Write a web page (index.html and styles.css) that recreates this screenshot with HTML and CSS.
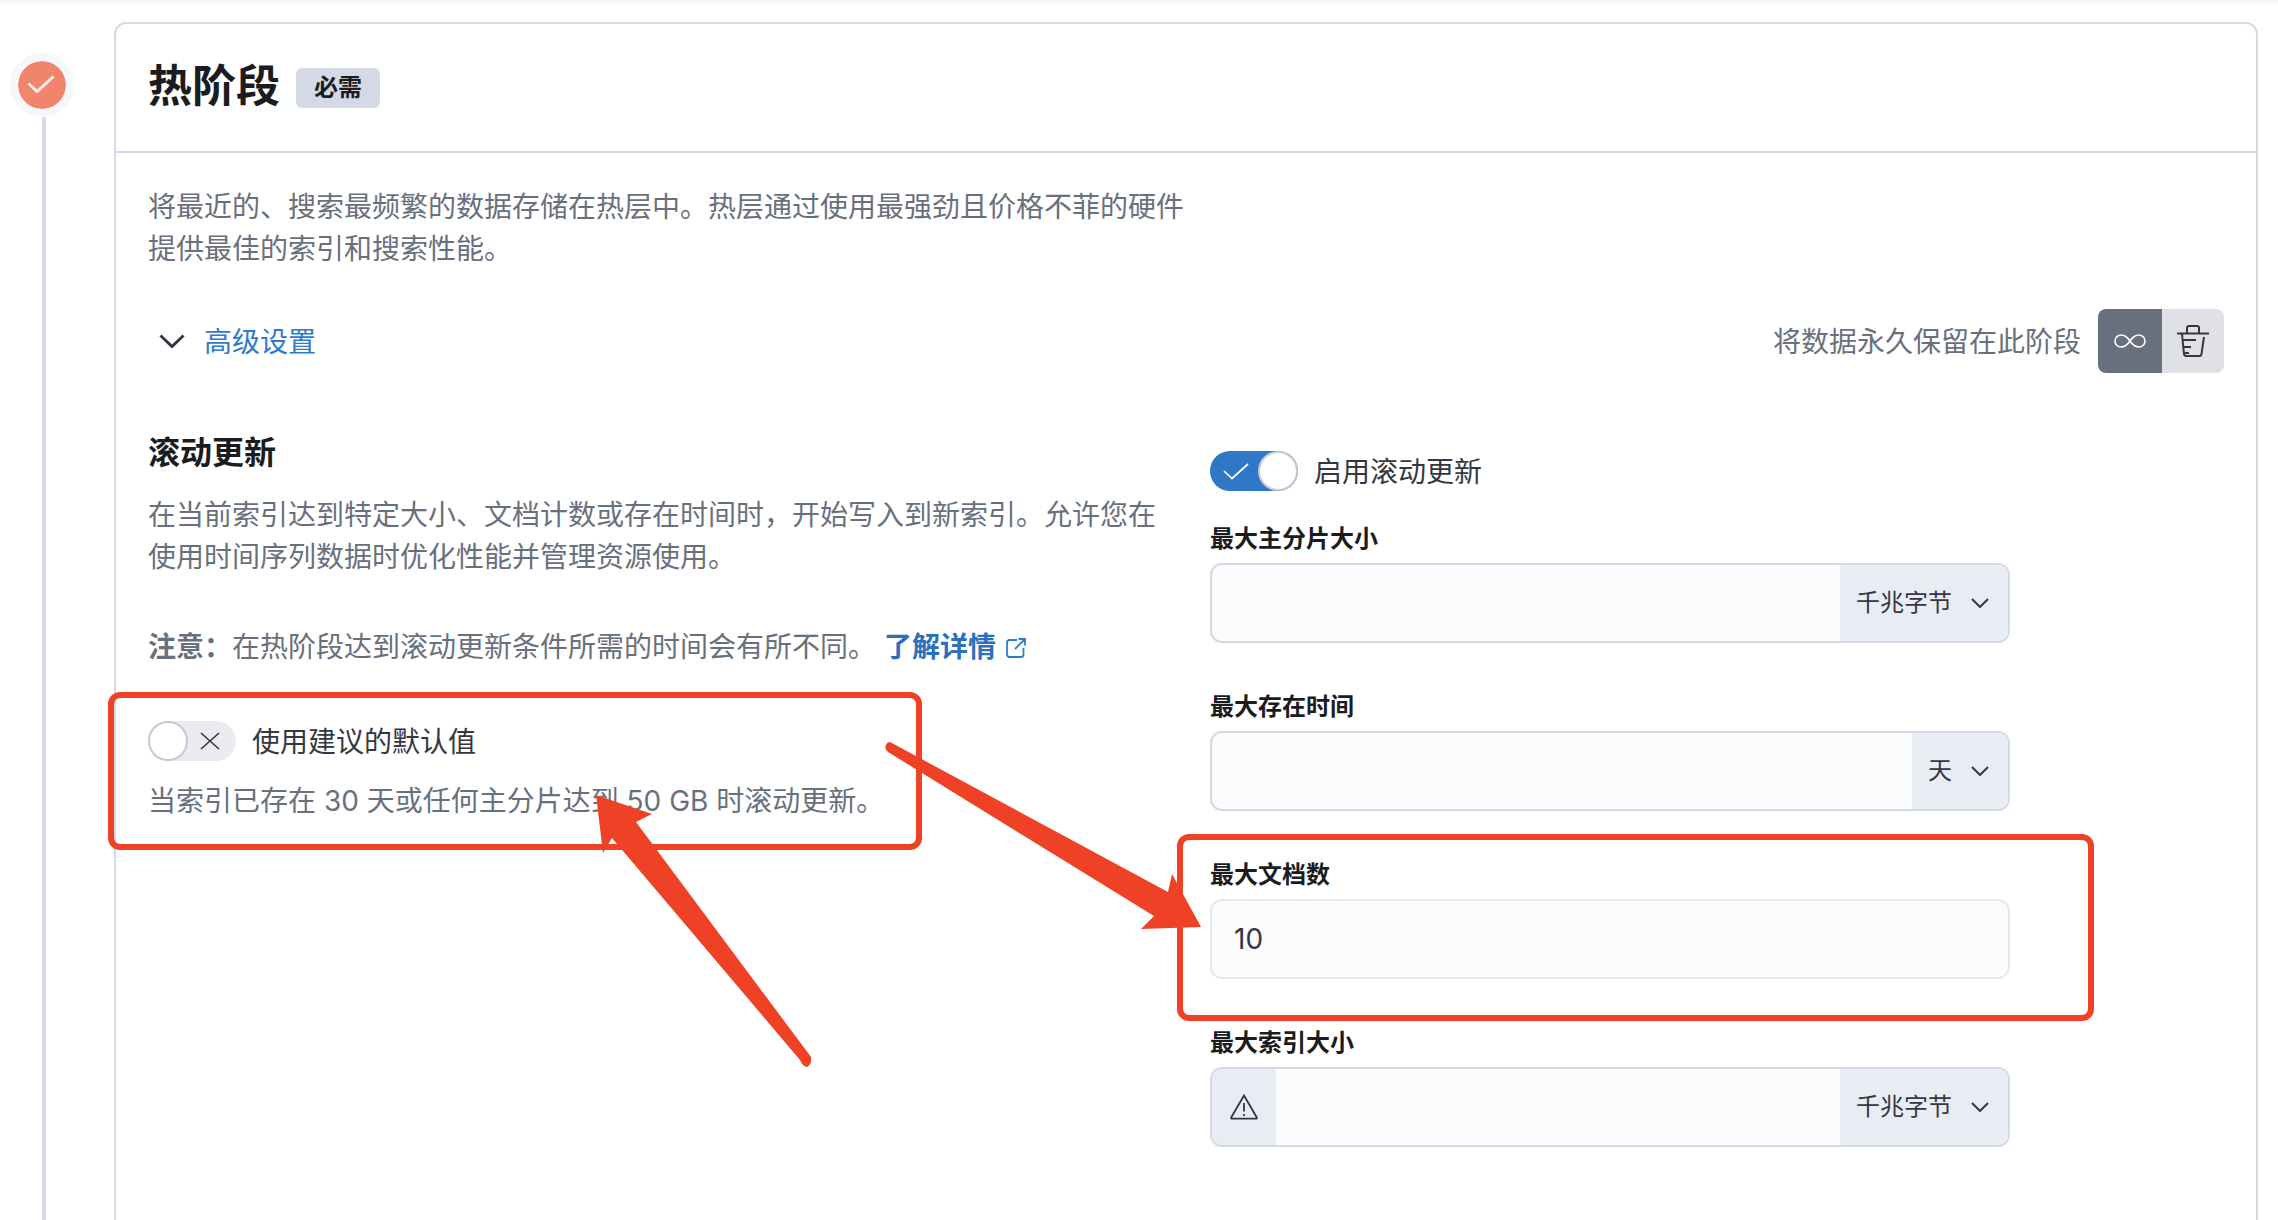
FILE: index.html
```html
<!DOCTYPE html>
<html lang="zh-CN">
<head>
<meta charset="utf-8">
<title>热阶段</title>
<link rel="stylesheet" href="styles.css">
</head>
<body>
<div class="page">
  <div class="timeline">
    <div class="step">
      <svg class="step-check" width="28" height="18" viewBox="0 0 28 18"><path d="M1.5 8.5 L10 16.5 L26.5 1.5"/></svg>
    </div>
    <div class="step-line"></div>
  </div>
  <main class="card">
    <header class="card-head">
      <h1 class="title">热阶段</h1>
      <span class="badge">必需</span>
    </header>
    <div class="card-body">
      <p class="desc">将最近的、搜索最频繁的数据存储在热层中。热层通过使用最强劲且价格不菲的硬件提供最佳的索引和搜索性能。</p>
      <div class="adv-row">
        <a class="adv-link">
          <svg class="adv-chev" width="26" height="14" viewBox="0 0 26 14"><path d="M1.5 1.5 L13 12.5 L24.5 1.5"/></svg>
          <span class="nudge">高级设置</span>
        </a>
        <div class="keep">
          <span class="keep-label nudge">将数据永久保留在此阶段</span>
          <div class="btn-group">
            <span class="btn btn-dark">
              <svg width="32" height="14" viewBox="0 0 32 14"><path class="icon-white" d="M16 7 C13 2.5 10.5 1 7 1 a6 6 0 0 0 0 12 c3.500 0 6-1.500 9-6 c3-4.500 5.500-6 9-6 a6 6 0 0 1 0 12 c-3.500 0-6-1.500-9-6z"/></svg>
            </span>
            <span class="btn btn-light">
              <svg width="32" height="33" viewBox="0 0 32 33"><path class="icon-dark" d="M0 8.500 H32 M10 8 V3 a2 2 0 0 1 2-2 h8 a2 2 0 0 1 2 2 v5 M5 9 L7 29 a2.500 2.500 0 0 0 2.500 2 h12.500 a2.500 2.500 0 0 0 2.500-2 L27 12 M6 15 H19 M7 22 H14 M8 28 H12"/></svg>
            </span>
          </div>
        </div>
      </div>
      <div class="columns">
        <section class="col-left">
          <h2 class="sub-title">滚动更新</h2>
          <p class="para">在当前索引达到特定大小、文档计数或存在时间时，开始写入到新索引。允许您在使用时间序列数据时优化性能并管理资源使用。</p>
          <p class="note"><strong>注意：</strong>在热阶段达到滚动更新条件所需的时间会有所不同。 <a class="learn">了解详情</a><svg class="ext" width="20" height="20" viewBox="0 0 20 20"><path d="M11 2 H3.500 a2.500 2.500 0 0 0-2.500 2.500 V16.500 a2.500 2.500 0 0 0 2.500 2.500 H15 a2.500 2.500 0 0 0 2.500-2.500 V10 M9 11 L18.500 1.500 M12.500 1 H19 V7.500"/></svg></p>
          <div class="switch-row">
            <span class="switch switch-off">
              <span class="knob"></span>
              <svg class="switch-x" width="20" height="18" viewBox="0 0 20 18"><path d="M1 1 L19 17 M19 1 L1 17"/></svg>
            </span>
            <span class="switch-label nudge">使用建议的默认值</span>
          </div>
          <p class="helper">当索引已存在 30 天或任何主分片达到 50 GB 时滚动更新。</p>
        </section>
        <section class="col-right">
          <div class="switch-row switch-row-on">
            <span class="switch switch-on">
              <svg class="switch-v" width="26" height="17" viewBox="0 0 26 17"><path d="M1 8 L9 15.500 L25 1"/></svg>
              <span class="knob"></span>
            </span>
            <span class="switch-label nudge">启用滚动更新</span>
          </div>
          <div class="field">
            <label class="field-label">最大主分片大小</label>
            <div class="input-wrap">
              <input class="input" type="text">
              <span class="append">千兆字节<svg class="chev" width="18" height="10" viewBox="0 0 18 10"><path d="M1 1 L9 9 L17 1"/></svg></span>
            </div>
          </div>
          <div class="field">
            <label class="field-label">最大存在时间</label>
            <div class="input-wrap">
              <input class="input" type="text">
              <span class="append">天<svg class="chev" width="18" height="10" viewBox="0 0 18 10"><path d="M1 1 L9 9 L17 1"/></svg></span>
            </div>
          </div>
          <div class="field">
            <label class="field-label">最大文档数</label>
            <div class="input-wrap input-wrap-light">
              <input class="input" type="text" value="10">
            </div>
          </div>
          <div class="field">
            <label class="field-label">最大索引大小</label>
            <div class="input-wrap">
              <span class="prepend">
                <svg width="28" height="26" viewBox="0 0 28 26"><path class="icon-dark-thin" d="M14 1.500 L26.800 23.500 a0.800 0.800 0 0 1-0.700 1.200 H1.900 a0.800 0.800 0 0 1-0.700-1.200 Z M14 9 V17.500 M14 20 V22"/></svg>
              </span>
              <input class="input" type="text">
              <span class="append">千兆字节<svg class="chev" width="18" height="10" viewBox="0 0 18 10"><path d="M1 1 L9 9 L17 1"/></svg></span>
            </div>
          </div>
        </section>
      </div>
    </div>
  </main>
  <svg class="marks" width="2278" height="1220" viewBox="0 0 2278 1220">
    <rect class="mark-box" x="111" y="695" width="808" height="152" rx="9"/>
    <rect class="mark-box" x="1180" y="837" width="911" height="181" rx="9"/>
    <path class="mark-arrow" d="M596 795 L652 814 L636 822 L811 1057 Q812 1064 807 1067 Q803 1067 800 1060 L612 838 L603 853 Z"/>
    <path class="mark-arrow" d="M890 742 L1168 892 L1172 874 L1201 927 L1141 929 L1154 916 L888 752 Q884 749 886 745 Q887 742 890 742 Z"/>
  </svg>
</div>
</body>
</html>
```

FILE: styles.css
```css
* { box-sizing: border-box; }
html, body { margin: 0; padding: 0; background: #fff; }
body {
  font-family: Inter, "Noto Sans CJK SC", sans-serif;
  font-size: 28px;
  line-height: 42px;
  color: #343741;
}
h1, h2, p { margin: 0; }
.page {
  position: relative;
  display: flex;
  width: 2278px;
  height: 1220px;
  overflow: hidden;
  padding: 22px 0 0 10px;
  background: linear-gradient(#f6f6f6, #fff 6px);
}
.timeline { width: 104px; flex: none; display: flex; flex-direction: column; padding-top: 31px; }
.step {
  width: 64px; height: 64px; border-radius: 50%;
  background: #f1856b; border: 8px solid #f5f7fa;
  display: flex; align-items: center; justify-content: center;
  background-clip: padding-box;
}
.step-check { margin: -2px 0 0 -2px; }
.step-check path { fill: none; stroke: #fdeee9; stroke-width: 3; }
.step-line { width: 4px; flex: 1; margin-left: 32px; background: #d3dae6; }
.card {
  width: 2144px; height: 1300px; flex: none;
  border: 2px solid #d3dae6; border-radius: 12px;
  background: #fff;
}
.card-head {
  height: 129px; border-bottom: 2px solid #d3dae6;
  padding: 0 0 4px 32px;
  display: flex; align-items: center; gap: 16px;
}
.title { font-size: 44px; line-height: 60px; font-weight: 700; color: #1a1c21; }
.badge {
  height: 40px; padding: 0 18px; margin-top: 4px;
  background: #d3dae6; border-radius: 6px;
  font-size: 24px; line-height: 40px; font-weight: 700; color: #1a1c21;
}
.card-body { padding: 33px 32px 0 32px; }
.desc { width: 1040px; color: #69707d; }
.adv-row { margin-top: 39px; display: flex; justify-content: space-between; align-items: center; height: 64px; }
.adv-link { display: flex; align-items: center; gap: 19px; color: #2f7bcb; padding-left: 11px; }
.adv-chev path { fill: none; stroke: #343741; stroke-width: 3; }
.nudge { padding-top: 2px; }
.keep { display: flex; align-items: center; gap: 17px; }
.keep-label { color: #69707d; }
.btn-group { display: flex; height: 64px; border-radius: 8px; overflow: hidden; }
.btn { display: flex; align-items: center; justify-content: center; }
.btn-dark { width: 64px; background: #69707d; }
.btn-light { width: 62px; background: #e0e1e6; }
.icon-white { fill: none; stroke: #fff; stroke-width: 1.600; }
.icon-dark { fill: none; stroke: #343741; stroke-width: 2; }
.icon-dark-thin { fill: none; stroke: #343741; stroke-width: 1.800; }
.columns { display: flex; margin-top: 58px; }
.col-left { width: 1062px; flex: none; }
.col-right { width: 800px; flex: none; padding-top: 20px; }
.sub-title { font-size: 32px; line-height: 44px; font-weight: 700; color: #1a1c21; }
.para { width: 1020px; margin-top: 19px; color: #69707d; }
.note { margin-top: 48px; color: #69707d; display: flex; align-items: center; white-space: pre-wrap; }
.note strong { font-weight: 700; }
.learn { font-weight: 700; color: #2a70bd; }
.ext { margin: 2px 0 0 10px; }
.ext path { fill: none; stroke: #2f7bcb; stroke-width: 1.800; }
.switch-row { display: flex; align-items: center; gap: 16px; height: 40px; margin-top: 53px; }
.switch-row-on { margin-top: 0; }
.switch { position: relative; display: flex; align-items: center; width: 88px; height: 40px; border-radius: 20px; flex: none; }
.switch-off { background: #e9ebf0; }
.switch-on { background: #2f78c8; }
.knob {
  width: 40px; height: 40px; border-radius: 50%; background: #fff;
  border: 2px solid #c6cad1; flex: none;
}
.switch-on .knob { margin-left: auto; }
.switch-x { margin-left: 12px; }
.switch-x path { fill: none; stroke: #343741; stroke-width: 1.600; }
.switch-v { margin-left: 13px; }
.switch-v path { fill: none; stroke: #fff; stroke-width: 1.700; }
.switch-label { color: #343741; }
.helper { margin-top: 19px; color: #69707d; }
.field { width: 800px; margin-top: 28px; }
.field + .field { margin-top: 44px; }
.field-label { display: block; height: 40px; font-size: 24px; line-height: 40px; font-weight: 700; color: #1a1c21; margin-bottom: 4px; }
.input-wrap {
  display: flex; height: 80px;
  background: #fbfcfd;
  border: 2px solid #d3dae6; border-radius: 12px;
  overflow: hidden;
}
.input-wrap-light { border-color: #e4e8f1; }
.input {
  flex: 1; min-width: 0; border: 0; background: transparent; outline: 0;
  padding: 0 22px; font: inherit; color: #343741;
}
.append, .prepend { background: #e9edf3; display: flex; align-items: center; flex: none; font-size: 24px; color: #343741; }
.append { padding: 0 19px 0 16px; }
.chev { margin-left: 19px; }
.chev path { fill: none; stroke: #343741; stroke-width: 2; }
.prepend { width: 64px; justify-content: center; }
.marks { position: absolute; left: 0; top: 0; pointer-events: none; }
.mark-box { fill: none; stroke: #ee4126; stroke-width: 6; }
.mark-arrow { fill: #ee4126; }
```
